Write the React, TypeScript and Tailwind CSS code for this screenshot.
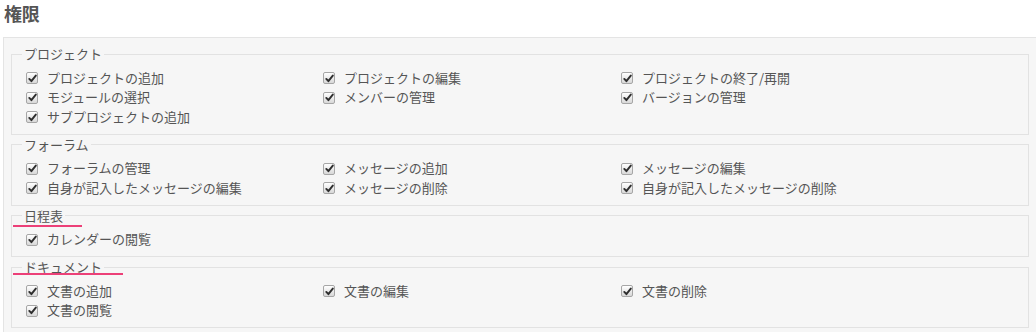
import React from 'react';

type Section = {
    title: string;
    mark?: { width: number; bottom: number };
    items: string[];
}

const sections: Section[] = [
    {
        title: "プロジェクト",
        items: ["プロジェクトの追加", "プロジェクトの編集", "プロジェクトの終了/再開", "モジュールの選択", "メンバーの管理", "バージョンの管理", "サブプロジェクトの追加"],
    },
    {
        title: "フォーラム",
        items: ["フォーラムの管理", "メッセージの追加", "メッセージの編集", "自身が記入したメッセージの編集", "メッセージの削除", "自身が記入したメッセージの削除"],
    },
    {title: "日程表", mark: {width: 69, bottom: -1}, items: ["カレンダーの閲覧"]},
    {title: "ドキュメント", mark: {width: 110, bottom: 2}, items: ["文書の追加", "文書の編集", "文書の削除", "文書の閲覧"]},
]

const CheckBox = () => (
    <span
        className="ml-[4px] mr-[9px] flex h-[12px] w-[12px] shrink-0 items-center justify-center rounded-[2px] border border-[#a6a6a6] bg-gradient-to-b from-[#ffffff] to-[#d8d8d8]">
        <svg width="9" height="9" viewBox="0 0 9 9">
            <path d="M1.3 4.9 L3.4 7.2 L7.8 1.6" fill="none" stroke="#2e2e2e" strokeWidth="1.9"
                  strokeLinecap="round" strokeLinejoin="round"/>
        </svg>
    </span>
)

const PermissionSet = ({section}: { section: Section }) => (
    <fieldset className="border border-[#e2e2e2] px-[10px] pt-[4.5px] pb-[6.5px]">
        <legend className="relative px-[2px] text-[13px] leading-[20px]">
            {section.title}
            {section.mark && (
                <span className="absolute left-[-9px] h-[2px] bg-[#ec4078]"
                      style={{width: section.mark.width, bottom: section.mark.bottom}}/>
            )}
        </legend>
        <div className="grid grid-cols-[297px_298px_297px]">
            {section.items.map((item) => (
                <label key={item} className="flex items-center text-[13px] leading-[19.5px]">
                    <CheckBox/>
                    <span className="-translate-y-[1px]">{item}</span>
                </label>
            ))}
        </div>
    </fieldset>
)

export default function App() {
    return (
        <div className="h-[332px] w-[1036px] overflow-hidden bg-white text-[#555]"
             style={{fontFamily: '"Noto Sans CJK JP", "Noto Sans", sans-serif'}}>
            <h2 className="pl-[4px] text-[18px] font-bold leading-[26px] tracking-[-0.3px]">権限</h2>
            <div className="ml-[3px] mt-[11px] w-[1034px] border border-[#e4e4e4] bg-[#f6f6f6] px-[7px] pt-[6px] pb-[10px]">
                {sections.map((s) => (
                    <PermissionSet key={s.title} section={s}/>
                ))}
            </div>
        </div>
    );
}
